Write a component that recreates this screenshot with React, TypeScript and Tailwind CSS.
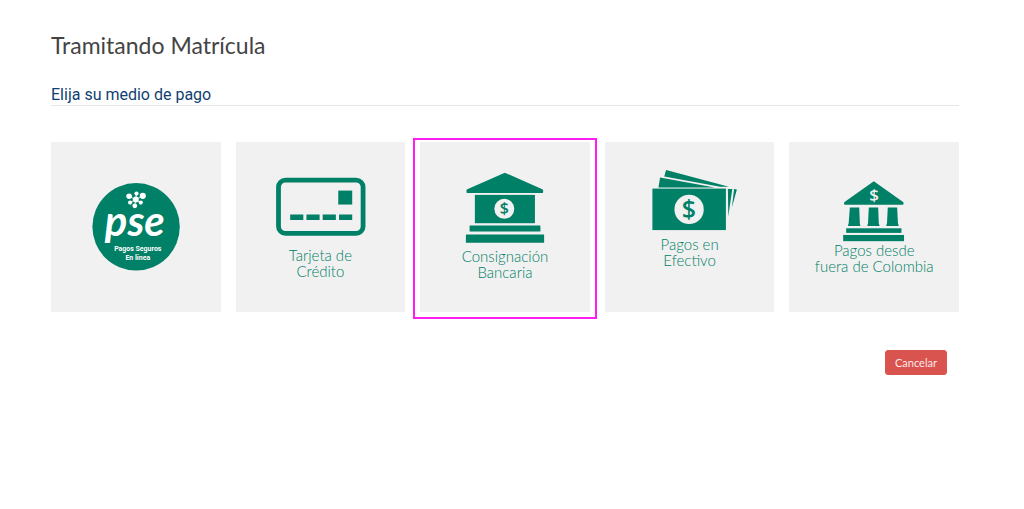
import type { ReactNode } from "react";

interface MedioPago {
  id: string;
  lineas: string[];
  icono: ReactNode;
  seleccionado?: boolean;
}

function PseLogo() {
  return (
    <svg viewBox="0 0 170 170" className="w-full" role="img" aria-label="PSE, Pagos Seguros En línea">
      <circle cx="85.3" cy="85" r="43.8" fill="#008066" />
      <g fill="#fff" stroke="#fff">
        <path d="M78.3 54.3 90 60.7M92 54l-12.7 6.7M85.7 51.7 84 64" strokeWidth="0.8" />
        <g stroke="none">
          <circle cx="85" cy="57.7" r="3" />
          <circle cx="78.3" cy="54.3" r="2.8" />
          <circle cx="92" cy="54" r="3.1" />
          <circle cx="85.7" cy="51.7" r="2.1" />
          <circle cx="79.3" cy="60.7" r="2.1" />
          <circle cx="90" cy="60.7" r="2.1" />
          <circle cx="84" cy="64" r="2.4" />
        </g>
      </g>
      <g fill="#fff" textAnchor="middle">
        <text x="84" y="94" className="font-['Lato',sans-serif] text-[42px] font-bold italic">pse</text>
        <text x="87" y="109" className="font-['Roboto',sans-serif] text-[7px] font-bold">Pagos Seguros</text>
        <text x="87" y="118" className="font-['Roboto',sans-serif] text-[7px] font-bold">En línea</text>
      </g>
    </svg>
  );
}

function TarjetaIcon() {
  return (
    <svg viewBox="0 0 170 105" className="w-full" fill="#008066" aria-hidden="true">
      <rect x="42.6" y="38.2" width="84.8" height="53.4" rx="7" fill="none" stroke="#008066" strokeWidth="4.8" />
      <rect x="102.5" y="48.7" width="14" height="14" />
      <path d="M54.3 72.7h13.2v5.6H54.3zM70.6 72.7h13.2v5.6H70.6zM86.9 72.7h13.2v5.6H86.9zM103.3 72.7h13.2v5.6h-13.2z" />
    </svg>
  );
}

function BancoIcon() {
  return (
    <svg viewBox="0 0 170 106" className="w-full" fill="#008066" aria-hidden="true">
      <path d="M85 30.7 122.6 47.4Q123.4 47.8 123.4 48.6V50Q123.4 51.2 122.2 51.2H47.8Q46.6 51.2 46.6 50V48.6Q46.6 47.8 47.4 47.4Z" />
      <rect x="55" y="53" width="60.2" height="28.4" />
      <rect x="49.7" y="83.7" width="71" height="6" rx="0.5" />
      <rect x="46" y="92.7" width="78.4" height="8.4" rx="0.5" />
      <circle cx="84.5" cy="67" r="10" fill="#f1f1f1" />
      <text x="84.5" y="72.5" textAnchor="middle" className="font-['Open_Sans',sans-serif] text-[16px] font-semibold">$</text>
    </svg>
  );
}

function EfectivoIcon() {
  return (
    <svg viewBox="0 0 170 94" className="w-full" fill="#008066" aria-hidden="true">
      <path d="M61.2 28 124.2 44.9H115.5L59.4 34.6Z" />
      <path d="M55.2 35.7 110 45.7H53.6Z" />
      <path d="M123.2 47h4.4l-4 27.7zM129.4 47l2.8.7-5 18z" />
      <rect x="47.5" y="46.7" width="73.7" height="41.6" />
      <circle cx="84.3" cy="67.6" r="14.7" fill="#f1f1f1" />
      <text x="84" y="76" textAnchor="middle" className="font-['Open_Sans',sans-serif] text-[25px] font-semibold">$</text>
    </svg>
  );
}

function ExteriorIcon() {
  return (
    <svg viewBox="0 0 170 100" className="w-full" fill="#008066" aria-hidden="true">
      <path d="M85 39.3 114 59.8Q114.8 60.4 114.8 61V62Q114.8 63 113.8 63H56.2Q55.2 63 55.2 62V61Q55.2 60.4 56 59.8Z" />
      <path d="M61 65.7H70.4L71 81.5 71.6 84.2H59L59.8 81.5ZM80 65.7H89.4L90 81.5 90.8 84.2H78.4L79.2 81.5ZM99 65.7H108.4L109.2 81.5 110 84.2H97.4L98.2 81.5Z" />
      <rect x="57.3" y="86.5" width="55.4" height="4.6" />
      <rect x="54.3" y="93.2" width="61" height="6.2" />
      <text x="85.3" y="58.8" textAnchor="middle" fill="#f1f1f1" className="font-['Open_Sans',sans-serif] text-[17px] font-semibold">$</text>
    </svg>
  );
}

const MEDIOS: MedioPago[] = [
  { id: "pse", lineas: [], icono: <PseLogo /> },
  { id: "tarjeta", lineas: ["Tarjeta de", "Crédito"], icono: <TarjetaIcon /> },
  { id: "consignacion", lineas: ["Consignación", "Bancaria"], icono: <BancoIcon />, seleccionado: true },
  { id: "efectivo", lineas: ["Pagos en", "Efectivo"], icono: <EfectivoIcon /> },
  { id: "exterior", lineas: ["Pagos desde", "fuera de Colombia"], icono: <ExteriorIcon /> },
];

export default function App() {
  return (
    <main className="min-h-screen bg-white pt-[31px] pr-[65px] pb-8 pl-[51px] font-['Lato',sans-serif]">
      <h1 className="text-[23px] leading-7 text-[#444]">Tramitando Matrícula</h1>
      <h2 className="mt-[25px] border-b border-[#e5e5e5] font-['Roboto',sans-serif] text-[16px] leading-[21px] text-[#0f3f73]">
        Elija su medio de pago
      </h2>

      <nav aria-label="Medios de pago" className="mt-9 grid grid-cols-5 gap-[15px]">
        {MEDIOS.map((m) => (
          <a key={m.id} href={`#${m.id}`} className="relative flex aspect-square flex-col bg-[#f1f1f1]">
            {m.icono}
            {m.lineas.length > 0 && (
              <span className="text-center text-[15px] leading-4 font-light text-[#008066]">
                {m.lineas.map((l) => (
                  <span key={l} className="block">{l}</span>
                ))}
              </span>
            )}
            {m.seleccionado && (
              <span className="pointer-events-none absolute -inset-x-[7px] -top-1 -bottom-[7px] border-2 border-[#ff1cf0]" />
            )}
          </a>
        ))}
      </nav>

      <div className="mt-[38px] flex justify-end pr-3">
        <button type="button" className="rounded-[3px] border border-[#d9534f] bg-[#d9534f] px-[9px] py-1 text-[11px] leading-[15px] text-[#fbe9e8]">
          Cancelar
        </button>
      </div>
    </main>
  );
}
